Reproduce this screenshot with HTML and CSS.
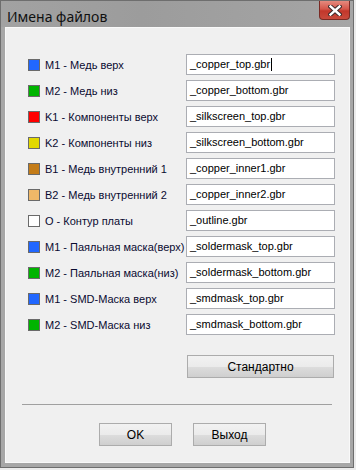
FILE: index.html
```html
<!DOCTYPE html>
<html>
<head>
  <title>Имена файлов</title>
  <link rel="stylesheet" href="styles.css">
</head>
<body>
<div class="window">
  <div class="titlebar">
    <span class="title">Имена файлов</span>
    <div class="close-btn">
      <svg width="14" height="11" viewBox="0 0 14 11">
        <path d="M2.5 1.5 L11.5 9.5 M11.5 1.5 L2.5 9.5" stroke="#3a2a2a" stroke-width="4.4" stroke-linecap="square"/>
        <path d="M2.5 1.5 L11.5 9.5 M11.5 1.5 L2.5 9.5" stroke="#ffffff" stroke-width="2.4" stroke-linecap="square"/>
      </svg>
    </div>
  </div>

  <div class="client">
    <div class="rows">
      <div class="row">
        <span class="swatch" style="background:#2167ff"></span>
        <span class="label">M1 - Медь верх</span>
        <div class="field">_copper_top.gbr<span class="caret"></span></div>
      </div>
      <div class="row">
        <span class="swatch" style="background:#00b400"></span>
        <span class="label">M2 - Медь низ</span>
        <div class="field">_copper_bottom.gbr</div>
      </div>
      <div class="row">
        <span class="swatch" style="background:#ff0000"></span>
        <span class="label">K1 - Компоненты верх</span>
        <div class="field">_silkscreen_top.gbr</div>
      </div>
      <div class="row">
        <span class="swatch" style="background:#e2d800"></span>
        <span class="label">K2 - Компоненты низ</span>
        <div class="field">_silkscreen_bottom.gbr</div>
      </div>
      <div class="row">
        <span class="swatch" style="background:#c47c18"></span>
        <span class="label">B1 - Медь внутренний 1</span>
        <div class="field">_copper_inner1.gbr</div>
      </div>
      <div class="row">
        <span class="swatch" style="background:#f0b868"></span>
        <span class="label">B2 - Медь внутренний 2</span>
        <div class="field">_copper_inner2.gbr</div>
      </div>
      <div class="row">
        <span class="swatch" style="background:#ffffff"></span>
        <span class="label">O - Контур платы</span>
        <div class="field">_outline.gbr</div>
      </div>
      <div class="row">
        <span class="swatch" style="background:#2167ff"></span>
        <span class="label">M1 - Паяльная маска(верх)</span>
        <div class="field">_soldermask_top.gbr</div>
      </div>
      <div class="row">
        <span class="swatch" style="background:#00b400"></span>
        <span class="label">M2 - Паяльная маска(низ)</span>
        <div class="field">_soldermask_bottom.gbr</div>
      </div>
      <div class="row">
        <span class="swatch" style="background:#2167ff"></span>
        <span class="label">M1 - SMD-Маска верх</span>
        <div class="field">_smdmask_top.gbr</div>
      </div>
      <div class="row">
        <span class="swatch" style="background:#00b400"></span>
        <span class="label">M2 - SMD-Маска низ</span>
        <div class="field">_smdmask_bottom.gbr</div>
      </div>
    </div>

    <div class="default-row">
      <div class="btn btn-wide">Стандартно</div>
    </div>

    <div class="separator"></div>

    <div class="actions">
      <div class="btn">OK</div>
      <div class="btn">Выход</div>
    </div>
  </div>
</div>
</body>
</html>
```

FILE: styles.css
```css
body {
  margin: 0;
  background: #ececec;
  font-family: "Liberation Sans", Arial, sans-serif;
  font-size: 11px;
  color: #000;
}

.window {
  width: 354px;
  height: 468px;
  box-sizing: border-box;
  border: 1px solid #6e6e6e;
  background: #a7a7a7;
  padding: 0 3px 4px 4px;
  display: flex;
  flex-direction: column;
}

.titlebar {
  height: 26px;
  display: flex;
  justify-content: space-between;
  align-items: flex-start;
  background: linear-gradient(90deg, #a2a2a2 0%, #9c9c9c 40%, #a5a5a5 100%);
  margin: 0 -3px 0 -4px;
  padding: 0 3px 0 6px;
}

.title {
  font-family: "Noto Sans", "Open Sans", sans-serif;
  font-size: 14px;
  line-height: 14px;
  margin-top: 9px;
  color: #101010;
}

.close-btn {
  width: 31px;
  height: 19px;
  box-sizing: border-box;
  border: 1px solid #7a2a24;
  border-top: none;
  border-radius: 0 0 4px 4px;
  background: linear-gradient(#e58a7e 0%, #d4564a 45%, #c2372b 55%, #c84a3c 100%);
  display: flex;
  align-items: center;
  justify-content: center;
}

.client {
  flex: 1;
  background: #f0f0f0;
  box-shadow: inset 0 0 0 1px #f9f9f9;
  padding: 27px 0 0 23px;
}

.rows {
  display: flex;
  flex-direction: column;
  gap: 5px;
}

.row {
  display: flex;
  align-items: center;
  height: 21px;
}

.swatch {
  width: 10px;
  height: 10px;
  border: 1px solid #6a6a6a;
  flex: none;
}

.label {
  width: 141px;
  margin-left: 5px;
  white-space: nowrap;
  color: #0a0a30;
}

.field {
  width: 149px;
  height: 21px;
  box-sizing: border-box;
  border: 1px solid #abadb3;
  background: #fff;
  padding: 0 3px;
  line-height: 19px;
  display: flex;
  align-items: center;
}

.caret {
  display: inline-block;
  width: 1px;
  height: 13px;
  background: #000;
  margin-left: 1px;
}

.default-row {
  margin-top: 20px;
  padding-left: 159px;
}

.btn {
  width: 73px;
  height: 23px;
  box-sizing: border-box;
  border: 1px solid #acacac;
  background: linear-gradient(#f2f2f2 0%, #ebebeb 50%, #dddddd 51%, #cfcfcf 100%);
  display: flex;
  align-items: center;
  justify-content: center;
  font-size: 12px;
}

.btn-wide {
  width: 147px;
}

.separator {
  margin: 26px 0 0 -6px;
  width: 310px;
  height: 1px;
  background: #a0a0a0;
}

.actions {
  margin-top: 18px;
  padding-left: 71px;
  display: flex;
  gap: 21px;
}
```
